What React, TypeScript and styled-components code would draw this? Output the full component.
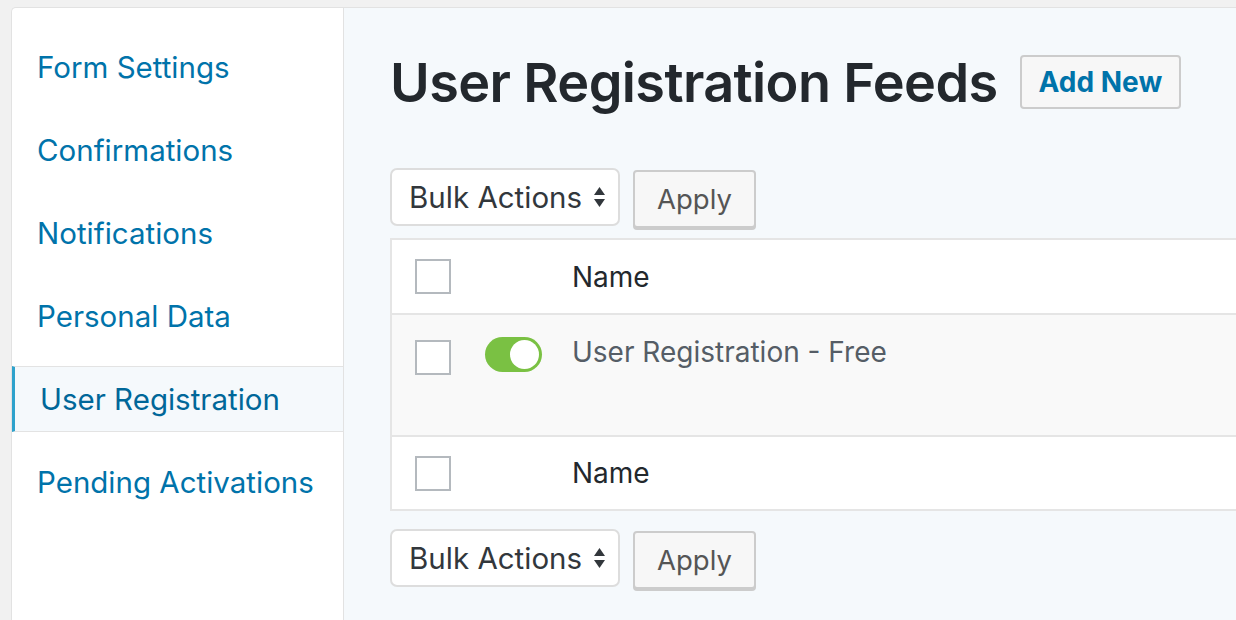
import styled, { createGlobalStyle, css } from "styled-components";

const GlobalStyle = createGlobalStyle`
    html, body {
        margin: 0;
        padding: 0;
        background: #f1f1f1;
        overflow: hidden;
    }
    body {
        font-family: Inter, "Noto Sans", sans-serif;
        -webkit-font-smoothing: antialiased;
    }
    *, *::before, *::after { box-sizing: border-box; }
`;

const Page = styled.div`
    height: 620px;
    padding: 7px 0 0 11px;
    display: flex;
`;

const Frame = styled.div`
    flex: 1;
    display: flex;
    background: #fff;
    border: 1px solid #e2e2e2;
    border-right: none;
    border-bottom: none;
    border-radius: 5px 0 0 0;
    overflow: hidden;
`;

const Sidebar = styled.nav`
    width: 332px;
    flex-shrink: 0;
    border-right: 1px solid #e2e2e2;
    padding-top: 26px;

    ul {
        list-style: none;
        margin: 0;
        padding: 0;
        display: flex;
        flex-direction: column;
        gap: 17px;
    }
`;

const NavItem = styled.li<{ $active?: boolean }>`
    height: 66px;
    display: flex;
    align-items: center;
    padding-left: 25px;
    border-top: 1px solid transparent;
    border-bottom: 1px solid transparent;
    font-size: 29.5px;
    color: #0073aa;

    ${({ $active }) => $active && css`
        background: #f5f9fc;
        border-top-color: #e3e3e3;
        border-bottom-color: #e3e3e3;
        border-left: 3px solid #2ea2cc;
        color: #006799;
    `}
`;

const Main = styled.main`
    flex: 1;
    background: #f5f9fc;
    padding: 46px 0 0 46px;
    min-width: 0;
`;

const Header = styled.div`
    display: flex;
    align-items: center;
    gap: 22px;
    height: 56px;

    h1 {
        margin: 0;
        font-size: 54px;
        font-weight: 600;
        letter-spacing: -0.6px;
        color: #23282d;
    }
`;

const AddButton = styled.button`
    height: 54px;
    padding: 0 17px;
    background: #f7f7f7;
    border: 2px solid #cccccc;
    border-radius: 4px;
    font-family: inherit;
    font-size: 28px;
    font-weight: 700;
    color: #0073aa;
`;

const Toolbar = styled.div<{ $top: number }>`
    display: flex;
    align-items: flex-start;
    gap: 13px;
    margin-top: ${({ $top }) => $top}px;
`;

const Select = styled.div`
    height: 58px;
    width: 230px;
    display: flex;
    align-items: center;
    justify-content: space-between;
    padding: 0 12px 0 17px;
    background: #fff;
    border: 2px solid #dddddd;
    border-radius: 7px;
    font-size: 29.5px;
    color: #32373c;
`;

const ApplyButton = styled.button`
    margin-top: 2px;
    height: 58px;
    width: 123px;
    background: #f7f7f7;
    border: 2px solid #cccccc;
    border-radius: 4px;
    box-shadow: 0 2px 0 #cccccc;
    font-family: inherit;
    font-size: 27.5px;
    color: #555555;
`;

const Table = styled.div`
    margin-top: 10px;
    width: 1000px;
    background: #fff;
    border: 2px solid #e5e5e5;
    border-right: none;
`;

const Row = styled.div<{ $body?: boolean }>`
    display: grid;
    grid-template-columns: 72px 85px 1fr;
    align-items: ${({ $body }) => ($body ? "start" : "center")};
    padding: ${({ $body }) => ($body ? "22px 0 0 23px" : "0 0 0 23px")};
    height: ${({ $body }) => ($body ? "122px" : "75px")};
    background: ${({ $body }) => ($body ? "#f9f9f9" : "#fff")};
    border-bottom: 2px solid #e5e5e5;

    &:last-child {
        border-bottom: none;
        height: 72px;
    }
`;

const Check = styled.span<{ $body?: boolean }>`
    width: 36px;
    height: 35px;
    margin-top: ${({ $body }) => ($body ? "3px" : "0")};
    background: #fff;
    border: 2px solid #b4b9be;
`;

const Toggle = styled.span`
    width: 57px;
    height: 35px;
    margin-left: -2px;
    border-radius: 18px;
    background: #7ac143;
    display: flex;
    align-items: center;
    justify-content: flex-end;
    padding-right: 3px;

    &::after {
        content: "";
        width: 29px;
        height: 29px;
        border-radius: 50%;
        background: #fff;
    }
`;

const Cell = styled.span<{ $muted?: boolean }>`
    font-size: 28px;
    line-height: 30px;
    color: ${({ $muted }) => ($muted ? "#555d66" : "#23282d")};
`;

const Arrows = () => (
    <svg width="13" height="22" viewBox="0 0 13 22">
        <path d="M6.5 1 L12 9 H1 Z" fill="#32373c" />
        <path d="M6.5 21 L12 13 H1 Z" fill="#32373c" />
    </svg>
);

const BulkBar = ({ top }: { top: number }) => (
    <Toolbar $top={top}>
        <Select>
            <span>Bulk Actions</span>
            <Arrows />
        </Select>
        <ApplyButton>Apply</ApplyButton>
    </Toolbar>
);

const navItems = [
    "Form Settings",
    "Confirmations",
    "Notifications",
    "Personal Data",
    "User Registration",
    "Pending Activations",
];

const App = () => {
    return (
        <>
            <GlobalStyle />
            <Page>
                <Frame>
                    <Sidebar>
                        <ul>
                            {navItems.map((item) => (
                                <NavItem key={item} $active={item === "User Registration"}>{item}</NavItem>
                            ))}
                        </ul>
                    </Sidebar>

                    <Main>
                        <Header>
                            <h1>User Registration Feeds</h1>
                            <AddButton>Add New</AddButton>
                        </Header>

                        <BulkBar top={58} />

                        <Table>
                            <Row>
                                <Check />
                                <span />
                                <Cell>Name</Cell>
                            </Row>
                            <Row $body>
                                <Check $body />
                                <Toggle />
                                <Cell $muted>User Registration - Free</Cell>
                            </Row>
                            <Row>
                                <Check />
                                <span />
                                <Cell>Name</Cell>
                            </Row>
                        </Table>

                        <BulkBar top={18} />
                    </Main>
                </Frame>
            </Page>
        </>
    );
};

export default App;
